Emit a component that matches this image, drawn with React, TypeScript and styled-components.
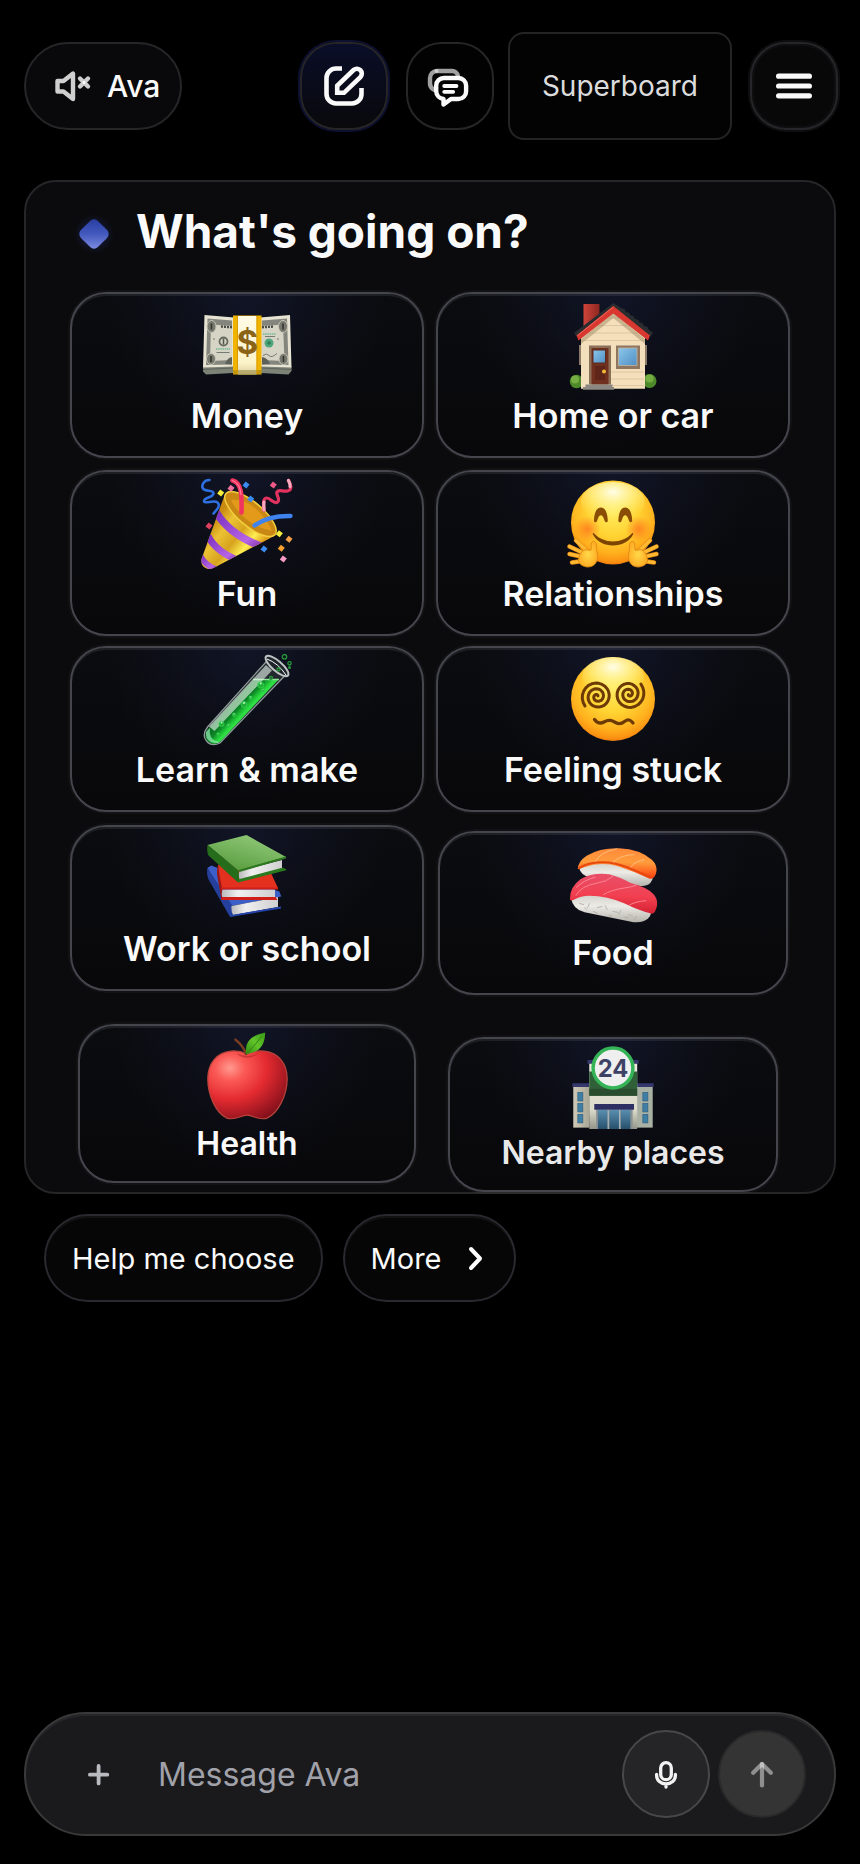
import React from "react"
import styled, { createGlobalStyle, css } from "styled-components"

const GlobalStyle = createGlobalStyle`
  * {
    box-sizing: border-box;
  }
  body {
    margin: 0;
    background: #000;
    color: #fafafa;
    font-family: Inter, "Liberation Sans", sans-serif;
  }
  button, input {
    font-family: inherit;
    color: inherit;
  }
  button {
    cursor: pointer;
  }
  svg {
    display: block;
    flex: none;
  }
`

const Page = styled.div`
  display: flex;
  flex-direction: column;
  min-height: 100vh;
  padding: 32px 24px 28px;
`

/* ---------- header ---------- */

const Header = styled.header`
  display: flex;
  align-items: center;
  justify-content: space-between;
  margin: 0 -2px 40px 0;
`

const Actions = styled.nav`
  display: flex;
  align-items: center;
  gap: 14px;
`

const ActionPair = styled.div`
  display: flex;
  align-items: center;
  gap: 18px;
`

const VoiceButton = styled.button`
  display: flex;
  align-items: center;
  gap: 15px;
  height: 88px;
  padding: 0 20px 0 26px;
  border: 2px solid #262628;
  border-radius: 44px;
  background: #09090b;
  font-size: 30px;
  font-weight: 500;
`

const IconButton = styled.button<{ $tone?: "accent" | "raised" }>`
  display: grid;
  place-items: center;
  width: 88px;
  height: 88px;
  padding: 0;
  border: 2px solid #262628;
  border-radius: 36px;
  background: #020203;
  ${({ $tone }) => $tone === "accent" && css`
    background: linear-gradient(180deg, #0a0e28 0%, #090b18 55%, #09090b 100%);
    box-shadow: 0 0 0 2px #0d1030;
  `}
  ${({ $tone }) => $tone === "raised" && css`
    background: #080809;
    box-shadow: 0 0 0 2px #0e0e10, inset 0 0 0 2px #0f0f12;
  `}
`

const BoardLink = styled.a`
  display: flex;
  align-items: center;
  height: 108px;
  padding: 0 32px;
  border: 2px solid #242426;
  border-radius: 16px;
  background: #030303;
  color: #dcdcde;
  font-size: 28px;
  text-decoration: none;
`

/* ---------- topic panel ---------- */

const Panel = styled.section`
  padding: 22px 44px 0;
  border: 2px solid #262628;
  border-radius: 32px;
  background: #0b0b0d;
`

const PanelHead = styled.div`
  display: flex;
  align-items: flex-end;
  gap: 18px;
  margin-bottom: 34px;
`

const Title = styled.h1`
  margin: 0;
  font-size: 46px;
  line-height: 54px;
  font-weight: 700;
`

const Topics = styled.div`
  display: grid;
  grid-template-columns: 1fr 1fr;
  column-gap: 12px;
  align-items: start;
`

interface TileSize {
  height: number;
  inset: number;
  icon: number;
  font: number;
}

// Tiles get smaller the closer they are to the end of the list.
const sizes: TileSize[] = [
  { height: 166, inset: 0, icon: 92, font: 34 },
  { height: 164, inset: 2, icon: 90, font: 34 },
  { height: 159, inset: 8, icon: 88, font: 32 },
  { height: 155, inset: 12, icon: 84, font: 32 },
]

const Tile = styled.button<{ $size: TileSize; $lead: number; $dim?: boolean }>`
  display: flex;
  flex-direction: column;
  align-items: center;
  gap: 4px;
  height: ${({ $size }) => $size.height}px;
  margin: ${({ $lead, $size }) => `${$lead}px ${$size.inset}px 0`};
  padding: 6px 0 0;
  border: 2px solid #45454e;
  border-radius: 36px;
  background:
    radial-gradient(ellipse 40% 95% at 50% 0, rgba(56, 80, 190, 0.13), rgba(56, 80, 190, 0.05) 55%, transparent),
    linear-gradient(180deg, #0b0c10, #08080a);
  box-shadow: 0 0 0 2px rgba(255, 255, 255, 0.03), inset 0 2px 0 rgba(255, 255, 255, 0.08);
  color: ${({ $dim }) => ($dim ? "#e9e9ea" : "#fafafa")};
  font-size: ${({ $size }) => $size.font}px;
  line-height: 40px;
  font-weight: 600;
  white-space: nowrap;
`

/* ---------- chips ---------- */

const Chips = styled.div`
  display: flex;
  gap: 20px;
  padding: 20px 20px 40px;
`

const Chip = styled.button`
  display: flex;
  align-items: center;
  gap: 20px;
  height: 88px;
  padding: 0 26px;
  border: 2px solid #29292f;
  border-radius: 44px;
  background: #060607;
  box-shadow: inset 0 2px 0 rgba(255, 255, 255, 0.05);
  font-size: 29px;
`

/* ---------- composer ---------- */

const Composer = styled.form`
  display: flex;
  align-items: center;
  gap: 8px;
  height: 124px;
  margin-top: auto;
  padding: 0 28px;
  border: 2px solid #39393a;
  border-radius: 62px;
  background: #1a1a1c;
  box-shadow: inset 0 2px 0 rgba(255, 255, 255, 0.06);
`

const AddButton = styled.button`
  display: grid;
  place-items: center;
  width: 88px;
  height: 88px;
  padding: 0;
  border: 0;
  background: none;
  color: #b9b9c0;
`

const MessageInput = styled.input`
  flex: 1;
  min-width: 0;
  height: 88px;
  padding: 0 8px;
  border: 0;
  outline: 0;
  background: none;
  font-size: 32px;
  &::placeholder {
    color: #a1a1aa;
    opacity: 1;
  }
`

const RoundButton = styled.button<{ $muted?: boolean }>`
  display: grid;
  place-items: center;
  width: 88px;
  height: 88px;
  padding: 0;
  border: 2px solid ${({ $muted }) => ($muted ? "#29292a" : "#48484a")};
  border-radius: 50%;
  background: ${({ $muted }) => ($muted ? "#343434" : "#252528")};
`

/* ---------- line icons ---------- */

const MutedIcon = () => (
  <svg width="40" height="36" viewBox="0 0 40 36" fill="none" stroke="#cfcfcf" strokeWidth="4.4" strokeLinejoin="round" strokeLinecap="round">
    <path d="M5.500 13h6l9.500-7.500v25.500L11.500 23.500h-6z" />
    <path d="M28 10.500l8 8" />
    <path d="M36 10.500l-8 8" />
    <circle cx="32" cy="14.500" r="1.500" fill="#fff" stroke="none" />
  </svg>
)

const ComposeIcon = () => (
  <svg width="48" height="48" viewBox="0 0 48 48" fill="none" stroke="#fafafa" strokeWidth="4.6">
    <path d="M22 6.500H16A9.500 9.500 0 0 0 6.500 16v16a9.500 9.500 0 0 0 9.500 9.500h16a9.500 9.500 0 0 0 9.500-9.500v-6" />
    <path d="M17.200 30.800v-7L33.800 7.800a4.900 4.900 0 0 1 6.800 7L24 30.800z" />
  </svg>
)

const ChatsIcon = () => (
  <svg width="48" height="48" viewBox="0 0 48 48" fill="none" strokeWidth="4.4" strokeLinecap="round" strokeLinejoin="round">
    <path stroke="#a0a0a1" d="M32 14a6 6 0 0 0-6-5H11a7 7 0 0 0-7 7v5.500a7 7 0 0 0 4 6.300" />
    <circle cx="10.500" cy="9" r="2" fill="#cfcfd0" />
    <path stroke="#fafafa" fill="#020203" d="M18 16h14.500a7.600 7.600 0 0 1 7.600 7.600v5.800a7.600 7.600 0 0 1-7.600 7.600h-7.500L17.500 42.500V37a8 8 0 0 1-7.300-7.600V23.600A7.600 7.600 0 0 1 18 16z" />
    <path stroke="#fafafa" strokeWidth="3.8" d="M18.200 24h12.300M18.200 29.800h9" />
  </svg>
)

const MenuIcon = () => (
  <svg width="48" height="48" viewBox="0 0 48 48" fill="none" stroke="#fafafa" strokeWidth="5.2" strokeLinecap="round">
    <path d="M8.600 14.200h30.800M8.600 24h30.800M8.600 33.800h30.800" />
  </svg>
)

const ChevronIcon = () => (
  <svg width="26" height="32" viewBox="0 0 26 32" fill="none" stroke="#fff" strokeWidth="4" strokeLinecap="round" strokeLinejoin="round">
    <path d="M9 7l9 9.500L9 26" />
  </svg>
)

const PlusIcon = () => (
  <svg width="32" height="32" viewBox="0 0 32 32" fill="none" stroke="currentColor" strokeWidth="3.8" strokeLinecap="round">
    <path d="M16.600 8v17.400M7.900 16.700h17.400" />
  </svg>
)

const MicIcon = () => (
  <svg width="32" height="32" viewBox="0 0 32 32" fill="none" stroke="#f2f2f3" strokeWidth="3.3" strokeLinecap="round">
    <rect x="10.700" y="4.700" width="10.600" height="17" rx="5.300" />
    <path d="M6.600 16.500v1a9.400 8.500 0 0 0 18.800 0v-1M16 26v3" />
  </svg>
)

const SendIcon = () => (
  <svg width="32" height="32" viewBox="0 0 32 32" fill="none" stroke="#fff" strokeOpacity="0.45" strokeWidth="4.2" strokeLinecap="round" strokeLinejoin="round">
    <path d="M16 6v21.500" />
    <path d="M7.200 14.800L16 6l8.800 8.800" />
  </svg>
)

const DiamondMark = () => (
  <svg width="48" height="48" viewBox="0 0 48 48">
    <defs>
      <linearGradient id="mark" x1="0" y1="0" x2="1" y2="1">
        <stop offset="0.1" stopColor="#2c40a4" />
        <stop offset="0.5" stopColor="#4359bd" />
        <stop offset="1" stopColor="#8491e6" />
      </linearGradient>
      <radialGradient id="markGlow">
        <stop offset="0.4" stopColor="#3046c0" stopOpacity="0.22" />
        <stop offset="1" stopColor="#3046c0" stopOpacity="0" />
      </radialGradient>
    </defs>
    <circle cx="24" cy="24" r="20" fill="url(#markGlow)" />
    <rect x="12" y="12" width="24" height="24" rx="5.500" transform="rotate(45 24 24)" fill="url(#mark)" />
  </svg>
)

/* ---------- topic pictures, all on a 92 unit box ---------- */

const MoneyArt = () => (
  <>
    <defs>
      <linearGradient id="band" x1="0" y1="0" x2="0" y2="1">
        <stop offset="0" stopColor="#fffbe6" />
        <stop offset="0.8" stopColor="#fdf3c9" />
        <stop offset="1" stopColor="#d9cf9f" />
      </linearGradient>
    </defs>
    <path d="M2 66l44-3 44.500 3v5l-3 3.500L60 73H32L5 74.500 2 71.500z" fill="#7d8377" />
    <path d="M2 69.500l30-1.500h28l30.500 1.500" stroke="#5d6459" fill="none" />
    <path d="M3.500 15L33 17.500v49L2 67.500zM89 15L59 17.500v49l31.500 1z" fill="#e6e3d2" />
    <path d="M6.500 18.500L31 20.500v44L5 65zM86 18.500L61 20.500v44l26.500.5z" fill="#84867d" />
    <path d="M10 24.500l21 1.500v34L9 61zM82 24.500L61 26v34l22.500 1z" fill="#d6d4c4" />
    <g fill="#77796f" stroke="#c9c7b7" strokeWidth="1">
      <ellipse cx="10.500" cy="26.500" rx="4.500" ry="6" />
      <ellipse cx="10" cy="59" rx="4.500" ry="5.500" />
      <ellipse cx="82" cy="26.500" rx="4.500" ry="6" />
      <ellipse cx="82.500" cy="59" rx="4.500" ry="5.500" />
    </g>
    <path d="M10.500 23.500v6M10 56v6M82 23.500v6M82.500 56v6" stroke="#34362f" strokeWidth="1.6" />
    <path d="M20 26.500l11 .8M61 27.300l12-.8" stroke="#4a4c45" strokeWidth="2.4" strokeDasharray="2 1" />
    <circle cx="22.500" cy="41.500" r="4" fill="none" stroke="#66695f" strokeWidth="1.8" />
    <path d="M22.500 38.500v6" stroke="#55584f" strokeWidth="1.6" />
    <circle cx="68" cy="43" r="4.500" fill="#4da67c" />
    <circle cx="68" cy="43" r="1.800" fill="#2c7d58" />
    <path d="M15 49h14M62 34h13" stroke="#74b894" strokeWidth="1.3" strokeDasharray="1.5 .7" />
    <path d="M15.500 52.500h13M64 36.500h10M62 55.500q4-3 6 0t8-2M12 39h2M76 39h2" stroke="#777a70" strokeWidth="1" fill="none" />
    <path d="M24 64q2-6 7-7v7.500zM69 64q-2-6-8-7v7.500z" fill="#5f6259" />
    <path d="M32 15.500h28.500v59H32z" fill="#f0b400" />
    <path d="M37 16h18.500v58.500H37z" fill="url(#band)" />
    <path d="M32 70h28.500v4.500H32z" fill="#806a1c" fillOpacity="0.4" />
    <path d="M36.500 16v58M56 16v58" stroke="#d99a00" strokeWidth="1" />
    <text x="46.300" y="54" textAnchor="middle" fontSize="33" fontWeight="700" fill="#8a6316">$</text>
  </>
)

const HouseArt = () => (
  <>
    <defs>
      <linearGradient id="pane" x1="0" y1="0" x2="1" y2="1">
        <stop offset="0" stopColor="#8cc6ea" />
        <stop offset="1" stopColor="#4f8fc4" />
      </linearGradient>
      <linearGradient id="chimney" x1="0" x2="1">
        <stop offset="0" stopColor="#cf443a" />
        <stop offset="1" stopColor="#8d2721" />
      </linearGradient>
    </defs>
    <path d="M12 45h4v20h-4zM76 45h4v20h-4z" fill="#8d7a68" />
    <path d="M16.500 4h16v17l-16 12z" fill="url(#chimney)" />
    <circle cx="9.500" cy="81.500" r="6.700" fill="#4f8a2a" />
    <circle cx="8" cy="79.500" r="4" fill="#76ad43" />
    <circle cx="82.500" cy="81" r="7" fill="#4f8a2a" />
    <circle cx="82.500" cy="78.500" r="4" fill="#76ad43" />
    <path d="M46.300 9L78 35v53.700H14V35z" fill="#f3dfbb" />
    <path d="M40 18h13M30 25.500h33M22 33h49M15 40.500h62M44 72h33M44 79h33M44 85.500h33" stroke="#dcc59c" strokeWidth="0.9" />
    <path d="M46.300 13L14 39v5l32.300-26L78 44v-5z" fill="#a5916e" fillOpacity="0.55" />
    <path d="M46.300 3L7 33l2.500 3.500L46.300 8.500l37.200 28L86 33l-5-4-.500-2-4-1.500-.500-2-4-1.500-.500-2-4-1.500-.500-2-4-1.500-.500-2-4-1.500-.500-2-4-1.500z" fill="#2a2d30" />
    <path d="M46.300 6L9.500 35.500l2 5L46.300 13.500l34.700 27 2-5z" fill="#d8382f" />
    <path d="M46.300 7L10.500 35.500" stroke="#f2685b" strokeWidth="1" />
    <path d="M22 45.500h22v39H22z" fill="#8b6f57" />
    <path d="M24.500 48h17v36.500h-17z" fill="#70301f" />
    <path d="M28 66h10v14H28z" fill="#5e2518" />
    <path d="M26 50h12.500v13H26z" fill="url(#pane)" stroke="#5a2a1c" />
    <circle cx="37" cy="71.500" r="2" fill="#f2bb35" />
    <path d="M49 45.500h24v23.500H49z" fill="#8f7660" />
    <path d="M51.500 48h18.500v17.500H51.500z" fill="url(#pane)" stroke="#c8b59a" strokeWidth="0.8" />
    <path d="M16 87h31v2.700H16zM18.500 84.500h27v2.500h-27z" fill="#8c8780" />
  </>
)

const confetti: [number, number, string][] = [
  [19.7, 15, "#f5ee3c"],
  [30, 10.3, "#f070a0"],
  [45, 7, "#3b8cf2"],
  [49.7, 21, "#3b8cf2"],
  [72.3, 7, "#ee5a86"],
  [8, 48, "#e0405e"],
  [78.3, 55.7, "#f5ee3c"],
  [88, 61.3, "#f6a04a"],
  [80.3, 70.3, "#f6a030"],
  [63, 71, "#3b8cf2"],
  [82.3, 81, "#f79ac6"],
]

const PartyArt = () => (
  <>
    <defs>
      <linearGradient id="cone" gradientUnits="userSpaceOnUse" x1="12" y1="44" x2="52" y2="76">
        <stop offset="0" stopColor="#c98a12" />
        <stop offset="0.25" stopColor="#ecc234" />
        <stop offset="0.55" stopColor="#d7a31e" />
        <stop offset="0.8" stopColor="#ffee52" />
        <stop offset="1" stopColor="#e0a01c" />
      </linearGradient>
      <linearGradient id="stripe" x1="0" y1="0" x2="1" y2="1">
        <stop offset="0" stopColor="#7a2fc0" />
        <stop offset="0.7" stopColor="#b765e6" />
        <stop offset="1" stopColor="#7a2a9c" />
      </linearGradient>
      <clipPath id="coneClip">
        <path d="M24 16L0.500 81q-1 7 5 9.500 4 1.500 9-1.500L75 57z" />
      </clipPath>
    </defs>
    <path d="M24 16L0.500 81q-1 7 5 9.500 4 1.500 9-1.500L75 57z" fill="url(#cone)" />
    <g clipPath="url(#coneClip)" fill="none" stroke="url(#stripe)">
      <path d="M15 34q14 24 50 36" strokeWidth="7.5" />
      <path d="M7 58q8 16 32 25" strokeWidth="7" />
      <path d="M-1 77q4 10 18 15" strokeWidth="6" />
    </g>
    <ellipse cx="49.500" cy="36" rx="32" ry="12" transform="rotate(40 49.500 36)" fill="#c98714" stroke="#f4cf3d" strokeWidth="1.500" />
    <path d="M30 22q16-2 30 14 8 9 11 17-20-4-32-18-7-8-9-13z" fill="#e39a1b" />
    <g fill="none" strokeLinecap="round">
      <path d="M8.500 2C3 2 0 7 2 10.500s11 1 10.500 5S3 19.500 3 23s10-1.500 13.500 1.500-.5 7-4 11" stroke="#2e6fe0" strokeWidth="2.6" />
      <path d="M31.500 2.500c9 2 9.500 14 9 32" stroke="#f0335f" strokeWidth="4.6" />
      <path d="M31.500 2.500c6 2 8 8 8.500 14" stroke="#ff7a96" strokeWidth="1.3" />
      <path d="M87.500 2.500c3 5 3.500 9.500-1 10.500s-9-2-10.500 1 4 7 .5 10-7-4.500-11-4-3 7-2.500 12.500" stroke="#e3325f" strokeWidth="3.2" />
      <path d="M87.500 2.500c1 2 2 4 1.500 6M63 24c-.5 3 0 5 0 8" stroke="#f8a9bd" strokeWidth="3.200" />
      <path d="M53.500 47.500q14-10 36-9.500" stroke="#3f84ee" strokeWidth="4.4" />
    </g>
    {confetti.map(([x, y, color]) => (
      <rect key={`${x}-${y}`} x={x - 2.5} y={y - 2.5} width="5" height="5" fill={color} transform={`rotate(38 ${x} ${y})`} />
    ))}
  </>
)

const FaceDefs = () => (
  <defs>
    <radialGradient id="face" cx="0.5" cy="0.36" r="0.66">
      <stop offset="0" stopColor="#ffec62" />
      <stop offset="0.45" stopColor="#ffd433" />
      <stop offset="0.75" stopColor="#ffb21e" />
      <stop offset="0.92" stopColor="#fb9212" />
      <stop offset="1" stopColor="#e56c0a" />
    </radialGradient>
    <radialGradient id="shine" cx="0.5" cy="0.25" r="0.7">
      <stop offset="0" stopColor="#fffff2" stopOpacity="0.95" />
      <stop offset="0.5" stopColor="#fff8a0" stopOpacity="0.6" />
      <stop offset="1" stopColor="#ffef6a" stopOpacity="0" />
    </radialGradient>
    <radialGradient id="blush">
      <stop offset="0" stopColor="#ff6a1a" stopOpacity="0.7" />
      <stop offset="1" stopColor="#ff6a1a" stopOpacity="0" />
    </radialGradient>
    <radialGradient id="palm">
      <stop offset="0" stopColor="#ffd94a" />
      <stop offset="1" stopColor="#ffae26" />
    </radialGradient>
  </defs>
)

const Hand = () => (
  <g>
    <g strokeLinecap="round" fill="none">
      <path d="M9 62.500l12 11.500M2.500 68.500l17 8M2.500 76l16 3.500M5 84.500l14-2" stroke="#dc8412" strokeWidth="4.4" />
      <path d="M9 62.500l12 11.500M2.500 68.500l17 8M2.500 76l16 3.500M5 84.500l14-2" stroke="#ffb932" strokeWidth="3.2" />
    </g>
    <path d="M17 72c3-1 5 1 7 0 1-3-1-7 1.500-8.500 3-1 4.500 2 4 6-.5 3 1.500 5 1 10-.5 6.500-5 9.500-10 9.500-4.500-.5-8-2.500-9-6 0-4 2-9 5.500-11z" fill="url(#palm)" stroke="#e08a14" strokeWidth="0.9" />
  </g>
)

const HugArt = () => (
  <>
    <FaceDefs />
    <circle cx="46" cy="44.500" r="42" fill="url(#face)" />
    <ellipse cx="46" cy="24" rx="32" ry="20" fill="url(#shine)" />
    <circle cx="20.500" cy="51" r="13" fill="url(#blush)" />
    <circle cx="71.500" cy="51" r="13" fill="url(#blush)" />
    <path d="M27 43.500C27 34 30 29.500 33.800 29.500s7 4.500 7 14c-1.500 1.300-2.600 1-3.300-1-2-7-5.400-7-7.200 0-.7 2-2 2.300-3.300 1zM51.400 43.500C51.400 34 54.400 29.500 58.200 29.500s7 4.500 7 14c-1.500 1.300-2.600 1-3.300-1-2-7-5.400-7-7.200 0-.7 2-2 2.300-3.300 1z" fill="#8a4d05" />
    <path d="M26.500 55q8 8.500 19.500 8.500T65.500 55c.8-.2 1 .7.5 1.500-4 7.500-11.500 11-20 11s-16-3.500-20-11c-.5-.8-.3-1.700.5-1.500z" fill="#7c4303" />
    <Hand />
    <g transform="translate(92 0) scale(-1 1)">
      <Hand />
    </g>
  </>
)

const spiral = (cx: number, cy: number, radius: number, start: number, turns: number) => {
  const steps = 60
  const points: string[] = []
  for (let i = 0; i <= steps; i++) {
    const t = i / steps
    const r = 1 + (radius - 1) * t
    const a = ((start + turns * 360 * t) * Math.PI) / 180
    points.push(`${(cx + r * Math.cos(a)).toFixed(1)} ${(cy + r * Math.sin(a)).toFixed(1)}`)
  }
  return `M${points.join("L")}`
}

const DizzyArt = () => (
  <>
    <FaceDefs />
    <circle cx="46" cy="45" r="42" fill="url(#face)" />
    <ellipse cx="46" cy="23" rx="31" ry="20" fill="url(#shine)" />
    <g fill="none" stroke="#6d3a06" strokeWidth="3" strokeLinecap="round" strokeLinejoin="round">
      <path d={spiral(30.2, 42.5, 15.5, 322, -2.5)} />
      <path d={spiral(62, 40, 15.5, 140, -2.5)} />
      <path d="M27.500 65.500c3 4 6 4.500 9.500 2.500 5-3 8-1.500 11.500.5s6 1.500 9-1c3.500-2.500 6-2 8.500 1.500" strokeWidth="3.3" />
    </g>
  </>
)

const bubbles: [number, number, number][] = [
  [59.7, 31, 3],
  [62, 36.5, 1.5],
  [43, 50.5, 3],
  [49.5, 43.7, 1.6],
  [33, 60.7, 1.6],
  [20.5, 70, 2.6],
  [27.5, 71.7, 1.5],
  [17, 80, 1.2],
]

const TubeArt = () => (
  <>
    <defs>
      <linearGradient id="liquid" gradientUnits="userSpaceOnUse" x1="36" y1="39" x2="50" y2="52">
        <stop offset="0" stopColor="#0a5f1e" />
        <stop offset="0.6" stopColor="#0c8426" />
        <stop offset="0.85" stopColor="#1fc436" />
        <stop offset="1" stopColor="#2fe044" />
      </linearGradient>
    </defs>
    <path d="M65 8L6.500 73q-6 8-1 14t13.500 2L83.500 22z" fill="#23282f" stroke="#8e9a98" strokeWidth="1.3" />
    <path d="M52.500 25.500h25L20 87q-6 5-12 1t-2-12z" fill="url(#liquid)" />
    <path d="M5 78q-1 11 12 11l2-1q-7-1-9-5t-1-9z" fill="#8fe5ad" fillOpacity="0.75" />
    <path d="M52 25.500h26" stroke="#8fe59b" strokeWidth="1.500" />
    <path d="M65 11l6 5.500L13.500 77l-5.500-4.500z" fill="#e6f5ec" fillOpacity="0.62" />
    {bubbles.map(([x, y, r]) => (
      <g key={`${x}-${y}`}>
        <circle cx={x} cy={y} r={r} fill="#1fae38" stroke="#36d851" strokeWidth="0.7" />
        <circle cx={x} cy={y - r / 2} r={r / 3} fill="#b9ffc0" />
      </g>
    ))}
    <ellipse cx="76" cy="12" rx="14.500" ry="5" transform="rotate(41 76 12)" fill="#20252b" stroke="#bdc3c2" strokeWidth="2" />
    <path d="M66 5q11 4 19 16" stroke="#fff" strokeWidth="1" fill="none" />
    <g fill="none" stroke="#26993a" strokeWidth="1.3">
      <circle cx="83.500" cy="2.700" r="2.200" />
      <circle cx="88.500" cy="9.300" r="1.700" />
      <circle cx="88.500" cy="13.500" r="0.900" />
      <circle cx="77.500" cy="15.500" r="1.500" />
      <circle cx="70" cy="24" r="1.500" />
    </g>
  </>
)

const BooksArt = () => (
  <>
    <defs>
      <linearGradient id="greenCover" x1="0.8" y1="0" x2="0.2" y2="1">
        <stop offset="0" stopColor="#94cc7c" />
        <stop offset="1" stopColor="#569a3c" />
      </linearGradient>
      <linearGradient id="sheets" x1="0" x2="1">
        <stop offset="0" stopColor="#b9b9bd" />
        <stop offset="0.3" stopColor="#f0f0f0" />
        <stop offset="1" stopColor="#cfcfd2" />
      </linearGradient>
    </defs>
    <path d="M6.300 35l4-2.500 68 26 2 5-50 9.500z" fill="#3b5ec9" />
    <path d="M6.300 35q-1 6 1 11L29 84l3-1-1-11z" fill="#25409c" />
    <path d="M30.500 73L77 64v10L32 82q-2-4-1.500-9z" fill="url(#sheets)" />
    <path d="M29 84l51-8.500v-2L31 82" fill="#2544b0" />
    <path d="M17 32l12-4 40 10 8 17H20z" fill="#e3301f" />
    <path d="M17 32q-2 6 0 15l3.500 19.500 2-.5-1.500-11-2-10z" fill="#9c1712" />
    <path d="M21.500 56.500H74v8.500H21.500q-1.500-4 0-8.500z" fill="url(#sheets)" />
    <path d="M20 67h56.500l-2-3H21zM20 54.500h57v2H20z" fill="#cf1f18" />
    <path d="M6.500 12l39-10L85 24 37 37.500z" fill="url(#greenCover)" />
    <path d="M6.500 12q-1 5 .5 10l30 27.500 2-1-1.500-11z" fill="#256d1b" />
    <path d="M38.500 38L81 27v8.500L39 47q-2-4-.5-9z" fill="url(#sheets)" />
    <path d="M37 49.500L86 37l-4-2.500L38.500 46zM37.500 37L85 23.500v2L38.500 39z" fill="#2c7a1f" />
  </>
)

const SushiArt = () => (
  <>
    <defs>
      <linearGradient id="salmon" x1="0.5" y1="0" x2="0.45" y2="1">
        <stop offset="0" stopColor="#ff8a3a" />
        <stop offset="0.45" stopColor="#ff9c3c" />
        <stop offset="0.8" stopColor="#ff5a1c" />
        <stop offset="1" stopColor="#e63b0c" />
      </linearGradient>
      <linearGradient id="tuna" x1="0.5" y1="0" x2="0.4" y2="1">
        <stop offset="0" stopColor="#e8506a" />
        <stop offset="0.55" stopColor="#f23f50" />
        <stop offset="1" stopColor="#d01f30" />
      </linearGradient>
      <linearGradient id="rice" x1="0" y1="0" x2="0" y2="1">
        <stop offset="0" stopColor="#c9c6be" />
        <stop offset="0.5" stopColor="#ecebe6" />
        <stop offset="1" stopColor="#b5b3ac" />
      </linearGradient>
    </defs>
    <path d="M11 28q2 10 12 11l51 9q9 1 12-6 2-5-2-8L46 20z" fill="url(#rice)" />
    <path d="M10 31q0-8 9-14 14-8 33-7.500 22 1 34 12 5 5 4.500 11-1 8-6.500 8.500-16-8-32-13-18-5-35 .5-6 2-7 2.500z" fill="url(#salmon)" />
    <path d="M11 30q4-3 12-5 18-4 38 4 14 6 24 10" stroke="#e8480e" strokeWidth="2" fill="none" />
    <path d="M28 23q4-9 22-13M46 24q8-8 22-8M64 29q4-6 14-8" stroke="#ffc58a" strokeWidth="0.8" fill="none" />
    <path d="M3 60q2 12 14 15l50 10q10 1 15-4 4-4 2-8L46 52z" fill="url(#rice)" />
    <path d="M2 61q0-12 11-20 12-7 29-5 12 3 22 9 16 4 23 11 5 5 4 12-2 10-7 8-12-3-26-10-18-8-36-8-9 0-16 4-4 2-4-1z" fill="url(#tuna)" />
    <g stroke="#aaa89f" strokeWidth="0.8" strokeLinecap="round">
      <path d="M12 66l4 1M22 66l-2 4M30 70l5-1M38 68l2 4M46 74l5 1M54 73l-2 4M62 77l4 2M70 79l-2 3M26 74l4 2M58 80l4 0M42 78l3 1M17 70l2 2" />
    </g>
    <path d="M8 58q5-10 22-13 9-1 16-7M36 57q8-5 22-7 8-1 12-3M62 68q6-4 18-5M8 50q8-8 20-11" stroke="#ff95a0" strokeWidth="0.8" fill="none" />
  </>
)

const AppleArt = () => (
  <>
    <defs>
      <radialGradient id="apple" cx="0.28" cy="0.25" r="0.85">
        <stop offset="0" stopColor="#ff9a90" />
        <stop offset="0.22" stopColor="#fb5a56" />
        <stop offset="0.55" stopColor="#e32a30" />
        <stop offset="1" stopColor="#84101b" />
      </radialGradient>
      <linearGradient id="leaf" x1="0" y1="1" x2="1" y2="0">
        <stop offset="0" stopColor="#2f8a10" />
        <stop offset="0.5" stopColor="#62c42a" />
        <stop offset="1" stopColor="#3a9a14" />
      </linearGradient>
    </defs>
    <path d="M46 23q9-4 18-3c15 1.500 24 13 24 29 0 18-10 36-21 41-9 3-14-3-21-3s-12 6-21 3C14 85 5 67 5 49c0-16 9-27.500 24-29q9-1 17 3z" fill="url(#apple)" stroke="#b8443c" strokeWidth="1.3" />
    <path d="M35 22q11 6 23 0-5 5-12 5t-11-5z" fill="#8e1118" fillOpacity="0.4" />
    <path d="M45 23q-3-9-11-15" stroke="#7a3d22" strokeWidth="2.6" fill="none" strokeLinecap="round" />
    <path d="M45 23Q42 5 65 0.500Q65 21 45 23z" fill="url(#leaf)" />
    <path d="M46.500 22Q53 15 62 4" stroke="#2c7d0f" strokeWidth="0.9" fill="none" />
  </>
)

const StoreArt = () => (
  <>
    <defs>
      <linearGradient id="wallLeft" x1="0" x2="1">
        <stop offset="0" stopColor="#d0cbb8" />
        <stop offset="1" stopColor="#aaa796" />
      </linearGradient>
      <linearGradient id="front" x1="0" y1="0" x2="0" y2="1">
        <stop offset="0" stopColor="#eceadc" />
        <stop offset="0.7" stopColor="#dcdccb" />
        <stop offset="1" stopColor="#94948a" />
      </linearGradient>
      <linearGradient id="glass" x1="0" y1="0" x2="0" y2="1">
        <stop offset="0" stopColor="#5a8fb0" />
        <stop offset="1" stopColor="#26506c" />
      </linearGradient>
    </defs>
    <path d="M2.500 45h17.500v45.500H2.500z" fill="url(#wallLeft)" />
    <path d="M72 45h17.500v45.500H72z" fill="#a9b0a4" />
    <path d="M1.500 42h19v4h-19zM72 42h18.500v4H72zM18 16.500h56v4H18z" fill="#34386c" />
    <path d="M20 20.500h52.500V92H20z" fill="url(#front)" />
    <path d="M20 29h52.500v26.500H20z" fill="#2f6038" />
    <path d="M20 48h52.500v7.500H20z" fill="#294d2e" />
    {[52, 64, 76].map((y) => (
      <g key={y} fill="#3f7fa5" stroke="#2c5c7c" strokeWidth="0.7">
        <rect x="7.500" y={y} width="5.500" height="9.300" />
        <rect x="78.700" y={y} width="5.500" height="9.300" />
      </g>
    ))}
    <path d="M27.500 71h40v21h-40z" fill="#8b9295" />
    <path d="M29.500 71h10.500v21H29.500zM42 71h10.500v21H42zM54.500 71H65v21H54.500z" fill="url(#glass)" />
    <path d="M40.800 71v21M53.300 71v21" stroke="#b9c2c6" strokeWidth="0.9" />
    <path d="M25.500 64.500H69V71H25.500z" fill="#2e2f63" />
    <circle cx="46" cy="25.200" r="21.800" fill="#efefef" stroke="#35b457" strokeWidth="3.800" />
    <text x="46" y="34.500" textAnchor="middle" fontSize="26" fontWeight="700" fill="#3d4166">24</text>
  </>
)

interface Topic {
  label: string;
  art: () => React.ReactElement;
  level: number;
  lead: number;
}

const topics: Topic[] = [
  { label: "Money", art: MoneyArt, level: 0, lead: 0 },
  { label: "Home or car", art: HouseArt, level: 0, lead: 0 },
  { label: "Fun", art: PartyArt, level: 0, lead: 12 },
  { label: "Relationships", art: HugArt, level: 0, lead: 12 },
  { label: "Learn & make", art: TubeArt, level: 0, lead: 10 },
  { label: "Feeling stuck", art: DizzyArt, level: 0, lead: 10 },
  { label: "Work or school", art: BooksArt, level: 0, lead: 13 },
  { label: "Food", art: SushiArt, level: 1, lead: 19 },
  { label: "Health", art: AppleArt, level: 2, lead: 29 },
  { label: "Nearby places", art: StoreArt, level: 3, lead: 42 },
]

const TopicTile = ({ label, art: Art, level, lead }: Topic) => (
  <Tile type="button" $size={sizes[level]} $lead={lead} $dim={level === 3}>
    <svg width={sizes[level].icon} height={sizes[level].icon} viewBox="0 0 92 92" aria-hidden="true">
      <Art />
    </svg>
    <span>{label}</span>
  </Tile>
)

const App = () => (
  <>
    <GlobalStyle />
    <Page>
      <Header>
        <VoiceButton type="button" aria-label="Ava, voice muted">
          <MutedIcon />
          Ava
        </VoiceButton>
        <Actions>
          <ActionPair>
            <IconButton type="button" $tone="accent" aria-label="New chat">
              <ComposeIcon />
            </IconButton>
            <IconButton type="button" aria-label="Chats">
              <ChatsIcon />
            </IconButton>
          </ActionPair>
          <ActionPair>
            <BoardLink href="#superboard">Superboard</BoardLink>
            <IconButton type="button" $tone="raised" aria-label="Menu">
              <MenuIcon />
            </IconButton>
          </ActionPair>
        </Actions>
      </Header>
      <Panel>
        <PanelHead>
          <DiamondMark />
          <Title>What's going on?</Title>
        </PanelHead>
        <Topics>
          {topics.map((topic) => (
            <TopicTile key={topic.label} {...topic} />
          ))}
        </Topics>
      </Panel>
      <Chips>
        <Chip type="button">Help me choose</Chip>
        <Chip type="button">
          More
          <ChevronIcon />
        </Chip>
      </Chips>
      <Composer onSubmit={(e) => e.preventDefault()}>
        <AddButton type="button" aria-label="Add attachment">
          <PlusIcon />
        </AddButton>
        <MessageInput type="text" aria-label="Message Ava" placeholder="Message Ava" />
        <RoundButton type="button" aria-label="Dictate">
          <MicIcon />
        </RoundButton>
        <RoundButton type="submit" $muted aria-label="Send">
          <SendIcon />
        </RoundButton>
      </Composer>
    </Page>
  </>
)

export default App
